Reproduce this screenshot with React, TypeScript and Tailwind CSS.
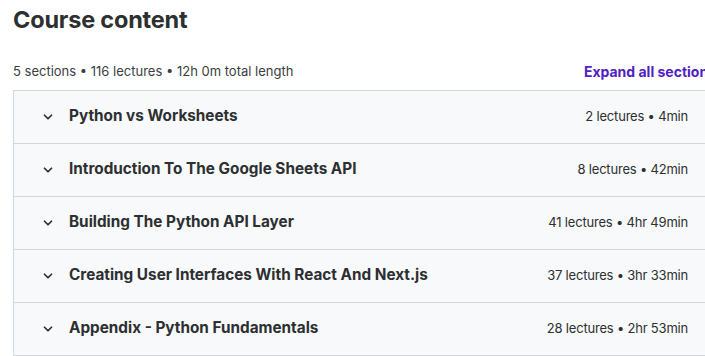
import { ChevronDown } from "lucide-react";

const sections = [
    { title: "Python vs Worksheets", meta: "2 lectures • 4min" },
    { title: "Introduction To The Google Sheets API", meta: "8 lectures • 42min" },
    { title: "Building The Python API Layer", meta: "41 lectures • 4hr 49min" },
    { title: "Creating User Interfaces With React And Next.js", meta: "37 lectures • 3hr 33min" },
    { title: "Appendix - Python Fundamentals", meta: "28 lectures • 2hr 53min" },
];

function App() {
    return (
        <main className="w-[705px] h-[356px] overflow-hidden bg-white text-[#2d2f31] font-['Inter',sans-serif]">
            <div className="w-[716px] pl-[13px]">
                <h2 className="text-[23.5px] font-bold leading-none pt-[8px] tracking-[-0.2px]">Course content</h2>
                <div className="flex items-center justify-between mt-[30px] h-[20px]">
                    <span className="text-[13px] text-[#3b3d3f]">5 sections • 116 lectures • 12h 0m total length</span>
                    <button className="text-[14px] font-bold text-[#5022c3] whitespace-nowrap">Expand all sections</button>
                </div>
                {/* Curriculum list */}
                <div className="mt-[8px] border border-[#d1d7dc] border-b-0">
                    {sections.map((s) => (
                        <div
                            key={s.title}
                            className="flex items-center justify-between h-[53px] bg-[#f7f9fa] border-b border-[#d1d7dc] pl-[27px] pr-[27px]"
                        >
                            <div className="flex items-center gap-[14px]">
                                <ChevronDown size={14} strokeWidth={3} className="text-[#2d2f31]" />
                                <span className="text-[15.3px] font-bold">{s.title}</span>
                            </div>
                            <span className="text-[13px] tracking-[-0.2px] text-[#2d2f31]">{s.meta}</span>
                        </div>
                    ))}
                </div>
            </div>
        </main>
    );
}

export default App;
